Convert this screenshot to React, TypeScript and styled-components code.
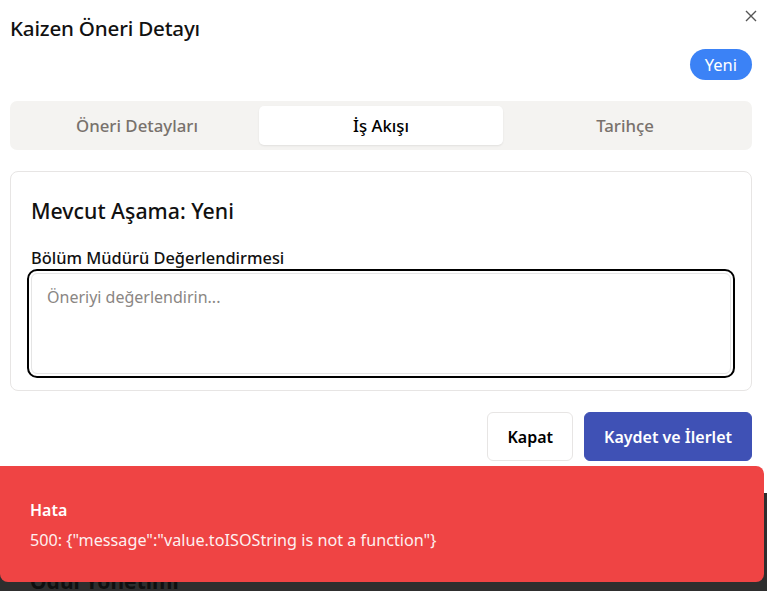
import React from "react";
import styled, { createGlobalStyle } from "styled-components";

const Global = createGlobalStyle`
  html, body { margin: 0; padding: 0; }
  body {
    background: #2e2e2e;
    font-family: "Noto Sans", "Open Sans", sans-serif;
    overflow: hidden;
  }
  * { box-sizing: border-box; }
`;

const Page = styled.div`
  position: relative;
  width: 767px;
  height: 591px;
`;

const BackHeading = styled.h1`
  position: absolute;
  left: 30px;
  top: 567px;
  margin: 0;
  font-size: 21px;
  line-height: 28px;
  font-weight: 700;
  color: #0f0f0f;
`;

const Modal = styled.div`
  position: relative;
  background: #fff;
  height: 493px;
  padding: 0 15px 0 10px;
  display: flex;
  flex-direction: column;
`;

const Title = styled.h2`
  margin: 14px 0 0;
  font-size: 20.6px;
  font-weight: 500;
  color: #111;
  line-height: 28px;
  letter-spacing: -0.2px;
`;

const CloseBtn = styled.button`
  position: absolute;
  top: 8px;
  right: 8px;
  width: 16px;
  height: 16px;
  padding: 0;
  border: none;
  background: none;
  display: flex;
  align-items: center;
  justify-content: center;
  color: #555;
`;

const BadgeRow = styled.div`
  display: flex;
  justify-content: flex-end;
  margin-top: 7px;
`;

const Badge = styled.span`
  height: 31px;
  padding: 0 15px;
  border-radius: 16px;
  background: #3b82f6;
  color: #fff;
  font-size: 16.5px;
  display: flex;
  align-items: center;
`;

const Tabs = styled.div`
  margin-top: 21px;
  height: 49px;
  background: #f4f3f1;
  border-radius: 7px;
  padding: 5px;
  display: grid;
  grid-template-columns: repeat(3, 1fr);
`;

const Tab = styled.div<{ $active?: boolean }>`
  display: flex;
  align-items: center;
  justify-content: center;
  font-size: 16.8px;
  font-weight: 500;
  border-radius: 5px;
  color: ${(p) => (p.$active ? "#000" : "#78716c")};
  background: ${(p) => (p.$active ? "#fff" : "transparent")};
  box-shadow: ${(p) => (p.$active ? "0 1px 2px rgba(0,0,0,0.08)" : "none")};
`;

const Card = styled.div`
  margin-top: 21px;
  height: 220px;
  border: 1px solid #e7e5e4;
  border-radius: 8px;
  padding: 26px 20px 0;
  display: flex;
  flex-direction: column;
`;

const StageTitle = styled.h3`
  margin: 0;
  font-size: 21.3px;
  font-weight: 500;
  color: #111;
  line-height: 26px;
`;

const Label = styled.label`
  margin-top: 24px;
  font-size: 16.4px;
  font-weight: 500;
  color: #111;
  line-height: 20px;
`;

const TextArea = styled.textarea`
  margin-top: 5px;
  height: 101px;
  width: 100%;
  resize: none;
  border: 1px solid #e5e5e5;
  border-radius: 6px;
  padding: 12px 15px;
  font-family: inherit;
  font-size: 16px;
  color: #111;
  outline: 2.5px solid #000;
  outline-offset: 2.5px;
  &::placeholder { color: #8a8683; }
`;

const Actions = styled.div`
  margin-top: 21px;
  display: flex;
  justify-content: flex-end;
  gap: 11px;
`;

const Button = styled.button<{ $primary?: boolean }>`
  height: 49px;
  padding: 0 ${(p) => (p.$primary ? "19px" : "19px")};
  border-radius: 6px;
  font-family: inherit;
  font-size: 16px;
  font-weight: 600;
  border: 1px solid ${(p) => (p.$primary ? "#3f51b5" : "#e7e5e4")};
  background: ${(p) => (p.$primary ? "#3f51b5" : "#fff")};
  color: ${(p) => (p.$primary ? "#fff" : "#000")};
`;

const Toast = styled.div`
  position: absolute;
  left: 0;
  top: 466px;
  width: 764px;
  height: 116px;
  background: #ef4444;
  border-radius: 0 8px 8px 8px;
  padding: 33px 30px 0;
  color: #fff;
  display: flex;
  flex-direction: column;
  gap: 8px;
`;

const ToastTitle = styled.div`
  font-size: 16px;
  font-weight: 600;
  line-height: 22px;
`;

const ToastMsg = styled.div`
  font-size: 16.2px;
  line-height: 22px;
  opacity: 0.92;
`;

export default function App() {
  return (
    <Page>
      <Global />
      <BackHeading>Ödül Yönetimi</BackHeading>
      <Modal>
        <Title>Kaizen Öneri Detayı</Title>
        <CloseBtn aria-label="Kapat">
          <svg width="12" height="12" viewBox="0 0 12 12">
            <path d="M1 1L11 11M11 1L1 11" stroke="currentColor" strokeWidth="1.4" />
          </svg>
        </CloseBtn>
        <BadgeRow>
          <Badge>Yeni</Badge>
        </BadgeRow>
        <Tabs>
          <Tab>Öneri Detayları</Tab>
          <Tab $active>İş Akışı</Tab>
          <Tab>Tarihçe</Tab>
        </Tabs>
        <Card>
          <StageTitle>Mevcut Aşama: Yeni</StageTitle>
          <Label>Bölüm Müdürü Değerlendirmesi</Label>
          <TextArea placeholder="Öneriyi değerlendirin..." />
        </Card>
        <Actions>
          <Button>Kapat</Button>
          <Button $primary>Kaydet ve İlerlet</Button>
        </Actions>
      </Modal>
      <Toast>
        <ToastTitle>Hata</ToastTitle>
        <ToastMsg>500: {'{"message":"value.toISOString is not a function"}'}</ToastMsg>
      </Toast>
    </Page>
  );
}
